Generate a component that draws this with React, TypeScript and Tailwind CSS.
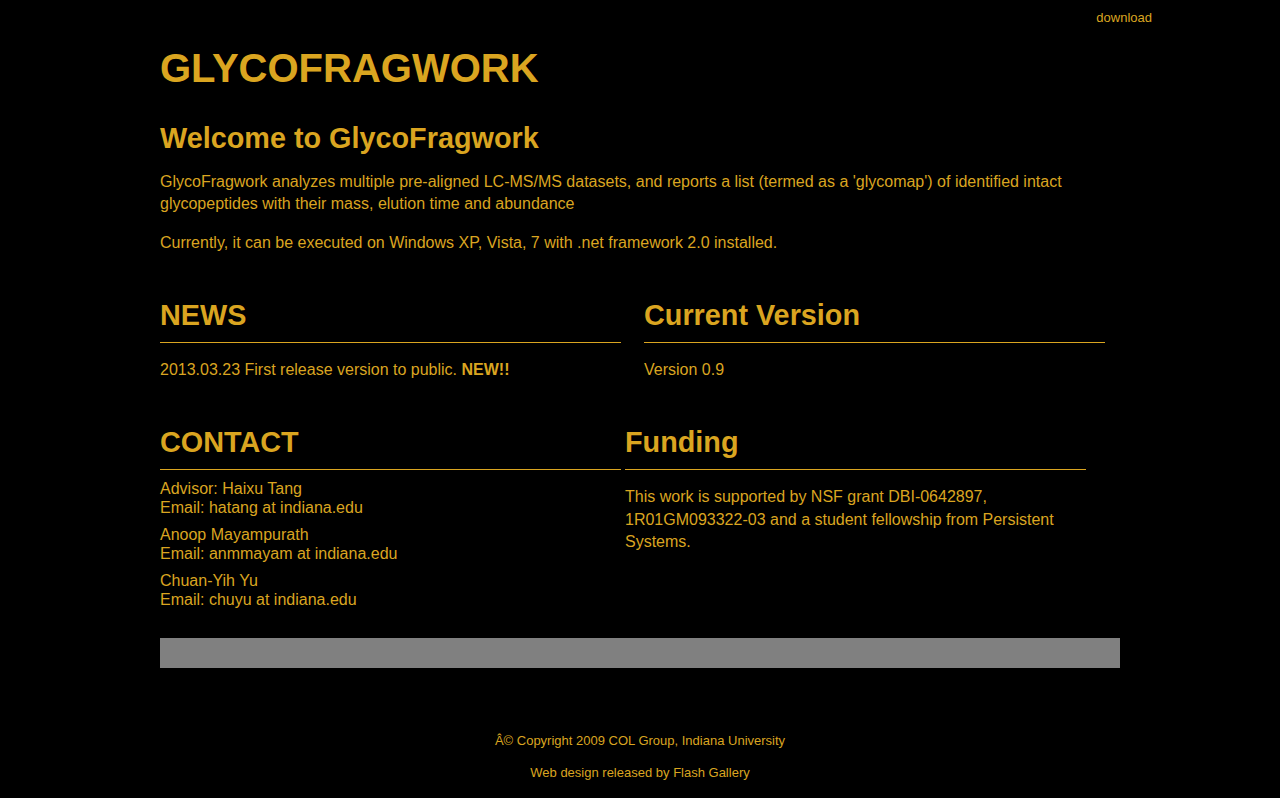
import React from "react";

const gold = "text-[#daa520]";

export default function App() {
  return (
    <div className={`min-h-[798px] bg-black ${gold}`} style={{ fontFamily: '"Liberation Sans", Arial, sans-serif' }}>
      <div className="flex justify-end pr-[128px] pt-[10px] text-[13px] leading-[15px]">
        <a href="#">download</a>
      </div>
      <div className="mx-auto w-[960px]">
        <h1 className="mt-[20px] text-[40px] font-bold leading-[46px]">GLYCOFRAGWORK</h1>
        <h2 className="mt-[31px] text-[28.8px] font-bold leading-[33px]">Welcome to GlycoFragwork</h2>
        <p className="mt-[16px] text-[16px] leading-[22px]">
          GlycoFragwork analyzes multiple pre-aligned LC-MS/MS datasets, and reports a list (termed as a 'glycomap') of identified intact glycopeptides with their mass, elution time and abundance
        </p>
        <p className="mt-[17px] text-[16px] leading-[22px]">
          Currently, it can be executed on Windows XP, Vista, 7 with .net framework 2.0 installed.
        </p>

        <div className="mt-[45px] flex gap-[23px]">
          <div className="w-[461px]">
            <h2 className="border-b border-[#daa520] pb-[10px] text-[28.8px] font-bold leading-[33px]">NEWS</h2>
            <p className="mt-[16px] text-[16px] leading-[22px]">
              2013.03.23 First release version to public. <b>NEW!!</b>
            </p>
          </div>
          <div className="w-[461px]">
            <h2 className="border-b border-[#daa520] pb-[10px] text-[28.8px] font-bold leading-[33px]">Current Version</h2>
            <p className="mt-[16px] text-[16px] leading-[22px]">Version 0.9</p>
          </div>
        </div>

        <div className="mt-[45px] flex gap-[4px]">
          <div className="w-[461px]">
            <h2 className="border-b border-[#daa520] pb-[10px] text-[28.8px] font-bold leading-[33px]">CONTACT</h2>
            <div className="mt-[10px] flex flex-col gap-[9px] text-[16px] leading-[18.5px]">
              <p>Advisor: Haixu Tang<br />Email: hatang at indiana.edu</p>
              <p>Anoop Mayampurath<br />Email: anmmayam at indiana.edu</p>
              <p>Chuan-Yih Yu<br />Email: chuyu at indiana.edu</p>
            </div>
          </div>
          <div className="w-[461px]">
            <h2 className="border-b border-[#daa520] pb-[10px] text-[28.8px] font-bold leading-[33px]">Funding</h2>
            <p className="mt-[16px] text-[16px] leading-[22.5px]">
              This work is supported by NSF grant DBI-0642897, 1R01GM093322-03 and a student fellowship from Persistent Systems.
            </p>
          </div>
        </div>

        <div className="mt-[29px] h-[30px] bg-[#808080]" />

        <div className="mt-[65px] flex flex-col items-center gap-[17px] pb-[20px] text-[13px] leading-[15px]">
          <p>Â© Copyright 2009 COL Group, Indiana University</p>
          <p>Web design released by Flash Gallery</p>
        </div>
      </div>
    </div>
  );
}
